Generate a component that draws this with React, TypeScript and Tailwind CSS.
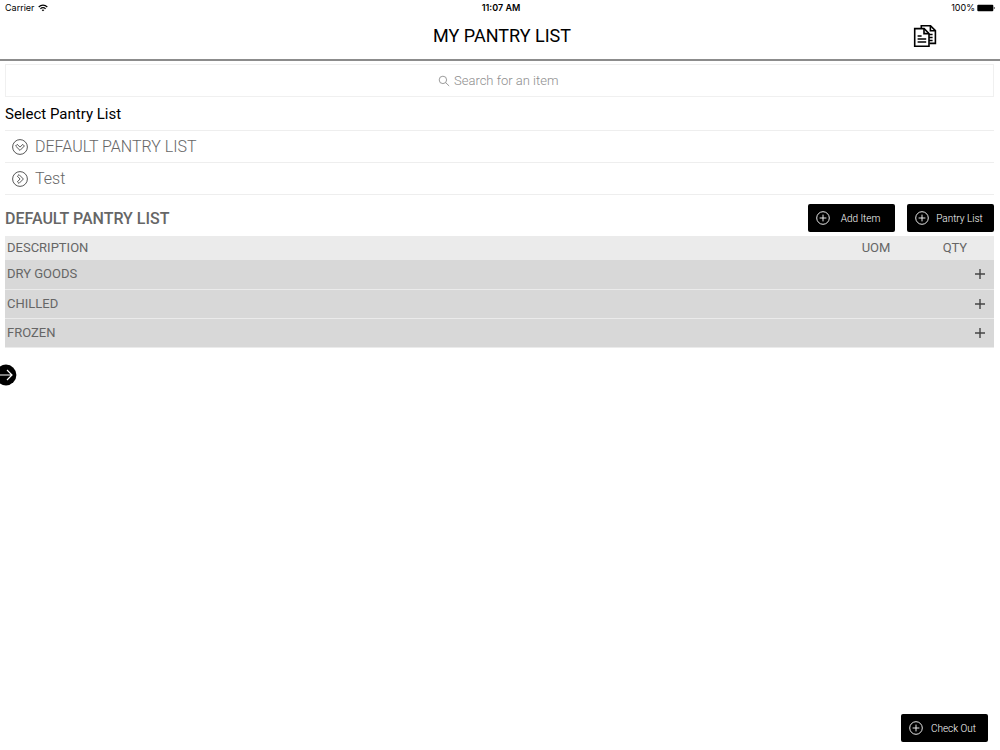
import React, { useState } from 'react';

interface PantryList {
  id: number;
  name: string;
}

const lists: PantryList[] = [
  { id: 1, name: 'DEFAULT PANTRY LIST' },
  { id: 2, name: 'Test' },
];

const categories = ['DRY GOODS', 'CHILLED', 'FROZEN'];

const CirclePlus = () => (
  <svg viewBox="0 0 14 14" className="h-3.5 w-3.5 shrink-0" fill="none" stroke="currentColor" aria-hidden="true">
    <circle cx="7" cy="7" r="6.3" strokeWidth="0.9" />
    <path d="M7 3.6v6.8M3.6 7h6.8" strokeWidth="0.9" />
  </svg>
);

const CircleChevron = ({ open }: { open: boolean }) => (
  <svg
    viewBox="0 0 16 16"
    className={`h-4 w-4 shrink-0 ${open ? 'rotate-90' : ''}`}
    fill="none"
    stroke="#444444"
    aria-hidden="true"
  >
    <circle cx="8" cy="8" r="7.4" strokeWidth="0.9" />
    <path d="M7 3.6 11.4 8 7 12.4 5.4 10.8 8.1 8 5.4 5.2Z" strokeWidth="0.9" strokeLinejoin="round" />
  </svg>
);

const DocumentsIcon = () => (
  <svg viewBox="0 0 24 24" className="h-6 w-6" fill="none" stroke="#000000" strokeWidth="1.6" aria-hidden="true">
    <path d="M8.3 4V1.7h9.2l4.9 4.9v12.8h-6" />
    <path d="M17.4 1.7v5h5" />
    <path d="M1.7 4.6h9.4l4.9 4.9v12.8H1.7z" fill="#ffffff" />
    <path d="M11 4.6v5h5" />
    <path d="M4.6 12h4M4.6 15h8.6M4.6 18h8.6M16 10.5h3.6M16 13.5h3.6M16 16.5h3.6" strokeWidth="1.4" />
  </svg>
);

const StatusBar = () => (
  <div className="grid h-4 grid-cols-3 items-center px-[5px] font-['Inter',sans-serif] text-[9px] leading-4 text-black">
    <div className="flex items-center gap-[3px]">
      <span>Carrier</span>
      <svg viewBox="0 0 10 8" className="h-2 w-2.5" fill="none" stroke="#000000" strokeWidth="1.2" aria-label="Wi-Fi">
        <path d="M.7 3C3.2.4 6.8.4 9.3 3" />
        <path d="M2.4 4.8c1.5-1.5 3.7-1.5 5.2 0" />
        <path d="M5 7.3 3.6 5.9c.9-.7 1.9-.7 2.8 0z" fill="#000000" stroke="none" />
      </svg>
    </div>
    <span className="pl-0.5 text-center font-semibold">11:07 AM</span>
    <div className="flex items-center justify-end gap-0.5">
      <span>100%</span>
      <svg viewBox="0 0 18 8" className="h-2 w-[18px]" aria-label="Battery">
        <rect x="0.3" y="0.8" width="16" height="6.4" rx="1" />
        <path d="M16.8 2.8c1.2 0 1.2 2.4 0 2.4z" />
      </svg>
    </div>
  </div>
);

const ActionButton = ({ label }: { label: string }) => (
  <button
    type="button"
    className="flex h-7 w-[87px] items-center rounded-xs bg-black pr-1 pl-2 text-[10px] font-light text-white"
  >
    <CirclePlus />
    <span className="flex-1 text-center">{label}</span>
  </button>
);

const App = () => {
  const [selected, setSelected] = useState(1);
  const [query, setQuery] = useState('');

  return (
    <div className="relative flex min-h-screen flex-col bg-white font-['Roboto',sans-serif] text-[#666666]">
      <StatusBar />
      <header className="grid h-[45px] grid-cols-[1fr_auto_1fr] items-center border-b-2 border-[#8c8c8c] pb-1">
        <h1 className="col-start-2 pl-1 text-lg leading-6 text-black">MY PANTRY LIST</h1>
        <button type="button" aria-label="Copy lists" className="mr-[63px] justify-self-end">
          <DocumentsIcon />
        </button>
      </header>

      <main className="pt-[3px] pr-[6px] pl-[5px]">
        <label className="flex h-[33px] items-center justify-center gap-1 border border-[#f0f0f0]">
          <svg viewBox="0 0 12 12" className="h-3 w-3" fill="none" stroke="#8e8e8e" strokeWidth="0.9" aria-hidden="true">
            <circle cx="4.9" cy="4.9" r="3.7" />
            <path d="m7.6 7.6 3.6 3.4" />
          </svg>
          <input
            type="text"
            aria-label="Search for an item"
            placeholder="Search for an item"
            value={query}
            onChange={e => setQuery(e.target.value)}
            className="w-[107px] text-[13px] font-light text-black outline-none placeholder:text-[#8e8e8e]"
          />
        </label>

        <h2 className="pt-[9px] pb-[7px] text-[15px] leading-[17px] text-black">Select Pantry List</h2>
        <ul className="border-t border-[#eeeeee]">
          {lists.map(list => (
            <li key={list.id} className="border-b border-[#eeeeee]">
              <button
                type="button"
                onClick={() => setSelected(list.id)}
                className="flex h-[31px] w-full items-center gap-[7px] pl-[7px] text-left text-base font-light"
              >
                <CircleChevron open={selected === list.id} />
                <span>{list.name}</span>
              </button>
            </li>
          ))}
        </ul>

        <div className="flex items-center justify-between pt-[9px] pb-1">
          <h2 className="pt-0.5 text-base font-medium">DEFAULT PANTRY LIST</h2>
          <div className="flex gap-3">
            <ActionButton label="Add Item" />
            <ActionButton label="Pantry List" />
          </div>
        </div>

        <table className="w-full table-fixed border-collapse text-[13px] leading-4">
          <thead>
            <tr className="h-6 bg-[#ebebeb]">
              <th className="pl-0.5 text-left font-normal">DESCRIPTION</th>
              <th className="w-20 text-center font-normal">UOM</th>
              <th className="w-[78px] text-center font-normal">QTY</th>
            </tr>
          </thead>
          <tbody>
            {categories.map(category => (
              <tr key={category} className="h-[29px] border-b border-[#ebebeb] bg-[#d8d8d8]">
                <td className="pl-0.5">{category}</td>
                <td />
                <td className="pr-[9px]">
                  <button type="button" aria-label={`Expand ${category}`} className="ml-auto block">
                    <svg viewBox="0 0 10 10" className="h-2.5 w-2.5" stroke="#444444" strokeWidth="1.4">
                      <path d="M5 0v10M0 5h10" />
                    </svg>
                  </button>
                </td>
              </tr>
            ))}
          </tbody>
        </table>
      </main>

      <button type="button" aria-label="Open menu" className="absolute top-1/2 left-0 -translate-y-1/2">
        <svg viewBox="0 0 17 22" className="h-[22px] w-[17px]" fill="none">
          <circle cx="6" cy="11" r="10.4" fill="#000000" />
          <path d="M0 11h12M7 6l5 5-5 5" stroke="#ffffff" strokeWidth="1.2" />
        </svg>
      </button>

      <footer className="mt-auto flex justify-end pr-3 pb-2">
        <ActionButton label="Check Out" />
      </footer>
    </div>
  );
};

export default App;
